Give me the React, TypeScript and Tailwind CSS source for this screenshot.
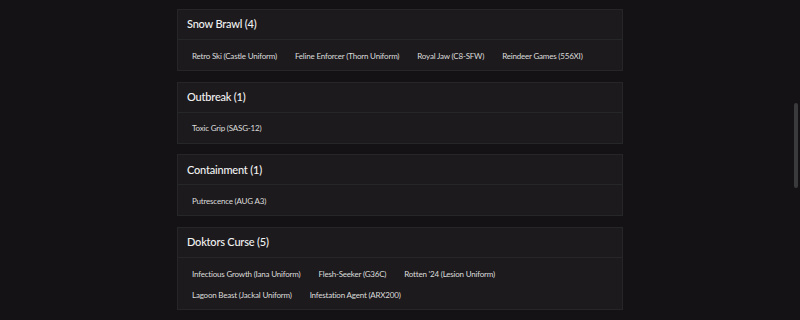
import React from 'react';

type Group = { title: string; items: string[] };

const groups: Group[] = [
  {
    title: 'Snow Brawl (4)',
    items: ['Retro Ski (Castle Uniform)', 'Feline Enforcer (Thorn Uniform)', 'Royal Jaw (C8-SFW)', 'Reindeer Games (556XI)'],
  },
  { title: 'Outbreak (1)', items: ['Toxic Grip (SASG-12)'] },
  { title: 'Containment (1)', items: ['Putrescence (AUG A3)'] },
  {
    title: 'Doktors Curse (5)',
    items: [
      'Infectious Growth (Iana Uniform)',
      'Flesh-Seeker (G36C)',
      "Rotten '24 (Lesion Uniform)",
      'Lagoon Beast (Jackal Uniform)',
      'Infestation Agent (ARX200)',
    ],
  },
];

const Card: React.FC<{ group: Group }> = ({ group }) => (
  <div className="border border-[#262528] bg-[#1c1a1d]">
    <div className="h-[30px] flex items-center px-[9px] border-b border-[#262528]">
      <h2 className="text-[11px] font-medium text-[#f2f2f2] tracking-[-0.2px]">{group.title}</h2>
    </div>
    <div className="flex flex-wrap gap-x-[18px] px-[14px] pt-[5px] pb-[4px]">
      {group.items.map((item) => (
        <span key={item} className="h-[21px] flex items-center text-[8px] text-[#dcdcdc] tracking-[-0.2px]">
          {item}
        </span>
      ))}
    </div>
  </div>
);

export default function App() {
  return (
    <div
      className="relative h-[320px] overflow-hidden bg-[#141215]"
      style={{ fontFamily: 'Lato, "Liberation Sans", sans-serif' }}
    >
      <div className="w-[446px] mx-auto pt-[9px] flex flex-col gap-[10.7px]">
        {groups.map((g) => (
          <Card key={g.title} group={g} />
        ))}
      </div>
      <div className="absolute right-[2px] top-[103px] w-[4px] h-[85px] rounded-full bg-[#3a393c]" />
    </div>
  );
}
